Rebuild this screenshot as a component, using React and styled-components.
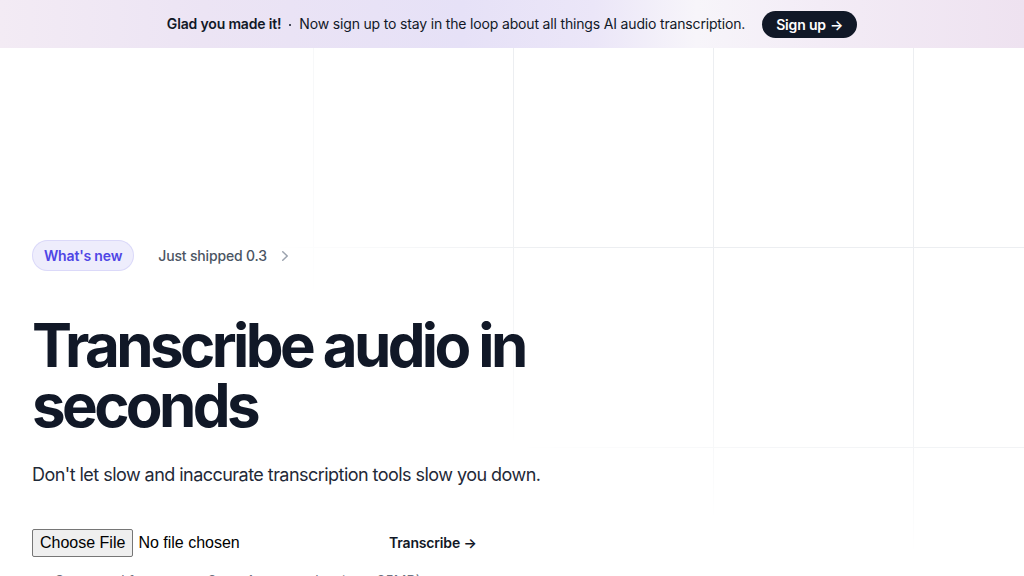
import styled, { createGlobalStyle } from "styled-components";

const GlobalStyle = createGlobalStyle`
  * { box-sizing: border-box; }
  html, body { margin: 0; padding: 0; background: #ffffff; }
  body {
    font-family: Inter, "Noto Sans", "Liberation Sans", sans-serif;
    color: #111827;
    -webkit-font-smoothing: antialiased;
  }
`;

const App = () => {
  return (
    <Page>
      <GlobalStyle />
      <Banner>
        <BannerText>
          <strong>Glad you made it!</strong>
          <Dot viewBox="0 0 2 2" aria-hidden="true">
            <circle cx="1" cy="1" r="1" />
          </Dot>
          Now sign up to stay in the loop about all things AI audio transcription.
        </BannerText>
        <SignUp href="#">
          Sign up <span aria-hidden="true">&rarr;</span>
        </SignUp>
      </Banner>

      <Hero>
        <GridBackdrop aria-hidden="true" />
        <Content>
          <BadgeRow>
            <Badge>What's new</Badge>
            <Shipped>
              Just shipped 0.3
              <Chevron viewBox="0 0 20 20" aria-hidden="true">
                <path
                  fillRule="evenodd"
                  d="M7.21 14.77a.75.75 0 01.02-1.06L11.168 10 7.23 6.29a.75.75 0 111.04-1.08l4.5 4.25a.75.75 0 010 1.08l-4.5 4.25a.75.75 0 01-1.06-.02z"
                  clipRule="evenodd"
                />
              </Chevron>
            </Shipped>
          </BadgeRow>

          <Title>Transcribe audio in seconds</Title>
          <Lead>Don't let slow and inaccurate transcription tools slow you down.</Lead>

          <UploadForm onSubmit={(e) => e.preventDefault()}>
            <FileInput type="file" accept="audio/*" />
            <TranscribeButton type="submit">
              Transcribe <span aria-hidden="true">&rarr;</span>
            </TranscribeButton>
          </UploadForm>
          <Hint>Supported formats: mp3, mp4, wav, webm (max 25MB)</Hint>
        </Content>
      </Hero>
    </Page>
  );
};

const Page = styled.div`
  min-height: 100vh;
  overflow: hidden;
`;

const Banner = styled.div`
  height: 48px;
  display: flex;
  align-items: center;
  justify-content: center;
  gap: 17px;
  padding: 0 24px;
  background: linear-gradient(
    90deg,
    #f3ebf4 0%,
    #ece4f4 20%,
    #e6e1f7 45%,
    #ebe6f8 58%,
    #f7f5fa 68%,
    #f3ecf6 80%,
    #eee2f0 100%
  );
`;

const BannerText = styled.p`
  margin: 0;
  font-size: 14px;
  line-height: 24px;
  letter-spacing: -0.012em;
  color: #111827;

  strong {
    font-weight: 600;
  }
`;

const Dot = styled.svg`
  display: inline-block;
  width: 2px;
  height: 2px;
  margin: 0 8px;
  vertical-align: middle;
  fill: currentColor;
`;

const SignUp = styled.a`
  display: inline-flex;
  align-items: center;
  gap: 4px;
  height: 27px;
  padding: 0 14px;
  border-radius: 999px;
  background: #111827;
  color: #ffffff;
  font-size: 14px;
  font-weight: 600;
  letter-spacing: -0.012em;
  text-decoration: none;
`;

const Hero = styled.section`
  position: relative;
  isolation: isolate;
  min-height: 528px;
`;

const GridBackdrop = styled.div`
  position: absolute;
  inset: 0;
  z-index: -1;
  background-image:
    linear-gradient(to right, #eceef1 1px, transparent 1px),
    linear-gradient(to bottom, #eceef1 1px, transparent 1px);
  background-size: 200px 200px;
  background-position: 113px -1px;
  -webkit-mask-image: radial-gradient(800px 500px at 100% 0, #000 70%, transparent 102%);
  mask-image: radial-gradient(800px 500px at 100% 0, #000 70%, transparent 102%);
`;

const Content = styled.div`
  padding: 192px 32px 0;
`;

const BadgeRow = styled.div`
  display: flex;
  align-items: center;
  gap: 24px;
`;

const Badge = styled.span`
  display: inline-flex;
  align-items: center;
  height: 31px;
  padding: 0 12px;
  border-radius: 999px;
  background: #eeedfc;
  box-shadow: inset 0 0 0 1px rgba(79, 70, 229, 0.12);
  color: #4f46e5;
  font-size: 14px;
  font-weight: 600;
  letter-spacing: -0.012em;
`;

const Shipped = styled.span`
  display: inline-flex;
  align-items: center;
  gap: 8px;
  color: #4b5563;
  font-size: 14px;
  font-weight: 500;
  letter-spacing: -0.012em;
`;

const Chevron = styled.svg`
  width: 20px;
  height: 20px;
  fill: #9ca3af;
`;

const Title = styled.h1`
  margin: 44px 0 0;
  max-width: 560px;
  font-size: 60px;
  line-height: 60px;
  font-weight: 700;
  letter-spacing: -0.06em;
  color: #111827;
`;

const Lead = styled.p`
  margin: 24px 0 0;
  font-size: 18px;
  line-height: 32px;
  letter-spacing: -0.03em;
  color: #1f2937;
`;

const UploadForm = styled.form`
  margin-top: 33px;
  display: flex;
  align-items: center;
  gap: 24px;
`;

const FileInput = styled.input`
  width: 319px;
  font-family: "Liberation Sans", Arial, sans-serif;
  font-size: 16px;
  color: #000000;

  &::file-selector-button {
    height: 28px;
    margin-right: 5px;
    padding: 0 7px;
    border: 1px solid #767676;
    border-radius: 2px;
    background: #efefef;
    color: #000000;
    font-family: "Liberation Sans", Arial, sans-serif;
    font-size: 16px;
  }
`;

const TranscribeButton = styled.button`
  padding: 10px 14px;
  border: 0;
  background: transparent;
  color: #111827;
  font-family: Inter, "Noto Sans", sans-serif;
  font-size: 14px;
  font-weight: 600;
  letter-spacing: -0.012em;
  cursor: pointer;
`;

const Hint = styled.p`
  margin: 10px 0 0 23px;
  font-size: 14px;
  line-height: 20px;
  color: #6b7280;
`;

export default App;
